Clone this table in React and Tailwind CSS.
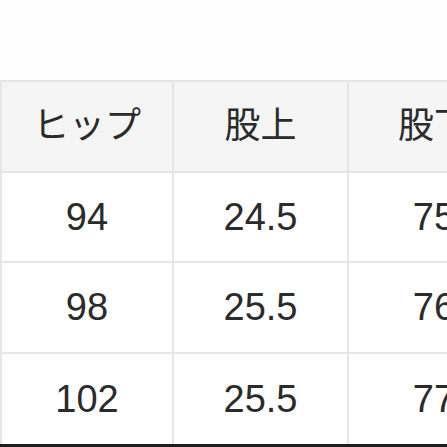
const headers = ["ヒップ", "股上", "股下"];
const rows = [
  ["94", "24.5", "75"],
  ["98", "25.5", "76"],
  ["102", "25.5", "77"],
];
const heights = ["h-[88px]", "h-[89px]", "h-[90px]"];

export default function App() {
  return (
    <div
      className="w-[447px] h-[447px] overflow-hidden bg-[#fefefe] flex flex-col"
      style={{ fontFamily: '"Liberation Sans", "Noto Sans CJK JP", sans-serif' }}
    >
      <div className="h-[80px] shrink-0" />
      <div className="grid grid-cols-[170px_173px_170px] gap-[2px] pt-[2px] pl-[2px] bg-[#e6e6e6] text-[#2b2b2b] text-[38px] w-max">
        {headers.map((h) => (
          <div key={h} className="h-[89px] bg-[#f5f5f5] flex items-center justify-center text-[36px] pb-[2px]">
            {h}
          </div>
        ))}
        {rows.map((r, i) =>
          r.map((v, j) => (
            <div key={i + "-" + j} className={`${heights[i]} bg-white flex items-center justify-center`}>
              {v}
            </div>
          ))
        )}
      </div>
      <div className="h-[3px] shrink-0 bg-[#1e1e1e]" />
    </div>
  );
}
